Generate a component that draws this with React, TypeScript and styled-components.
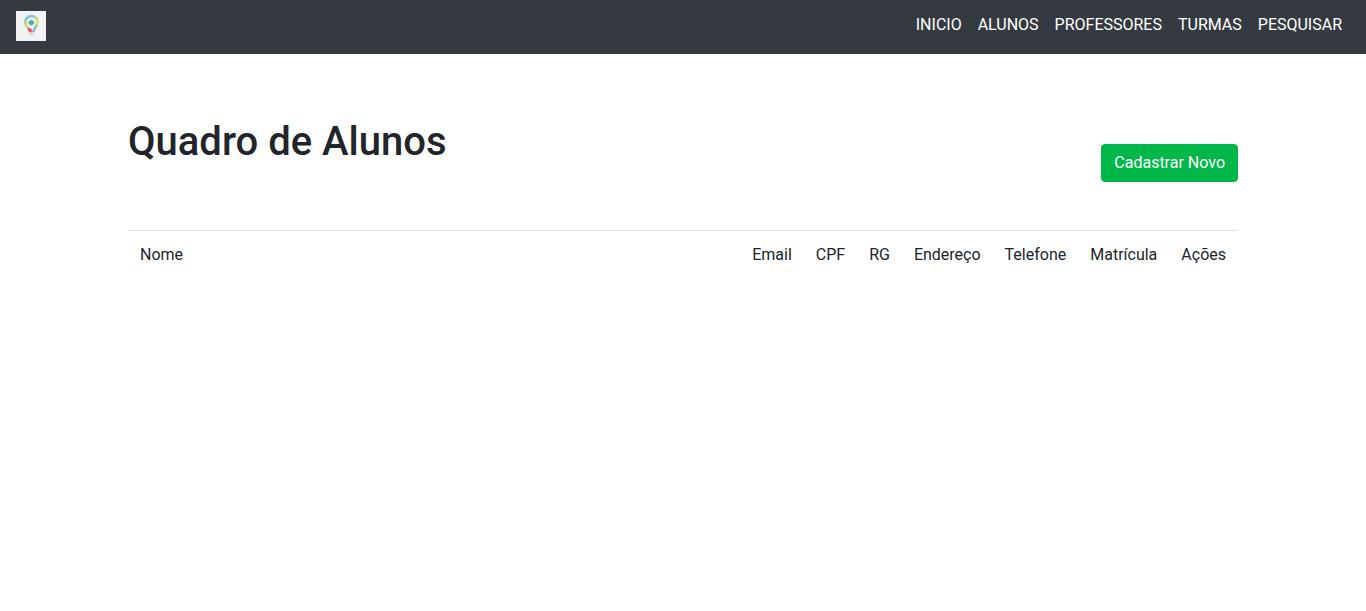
import React from "react";
import styled, { createGlobalStyle } from "styled-components";

const GlobalStyle = createGlobalStyle`
  *, *::before, *::after { box-sizing: border-box; }
  body {
    margin: 0;
    background: #fff;
    color: #212529;
    font-family: Roboto, "Liberation Sans", sans-serif;
    font-size: 16px;
    line-height: 24px;
  }
`;

const Navbar = styled.nav`
  display: flex;
  align-items: flex-start;
  justify-content: space-between;
  padding: 5px 16px 9px;
  background: #343a40;
`;

const Brand = styled.a`
  display: block;
  margin-top: 6px;
  line-height: 0;
`;

const NavList = styled.ul`
  display: flex;
  flex-wrap: wrap;
  margin: 0;
  padding: 0;
  list-style: none;
`;

const NavLink = styled.a`
  display: block;
  padding: 8px;
  color: #fff;
  text-decoration: none;
`;

const Container = styled.main`
  max-width: 1140px;
  margin: 0 auto;
  padding: 64px 15px 0;
`;

const Header = styled.header`
  display: flex;
  align-items: flex-start;
  justify-content: space-between;
  margin-bottom: 48px;
`;

const Title = styled.h1`
  margin: 0;
  font-size: 40px;
  font-weight: 500;
  line-height: 48px;
`;

const Button = styled.button`
  margin-top: 26px;
  padding: 6px 12px;
  border: 1px solid #00b84a;
  border-radius: 4px;
  background: #00b84a;
  color: #fff;
  font: inherit;
  cursor: pointer;
`;

const Table = styled.table`
  width: 100%;
  border-collapse: collapse;
`;

const HeadCell = styled.th<{ $wide?: boolean }>`
  width: ${({ $wide }) => ($wide ? "100%" : "auto")};
  padding: 12px;
  border-top: 1px solid #dee2e6;
  font-weight: 400;
  text-align: left;
  vertical-align: top;
  white-space: nowrap;
`;

const Logo = () => (
  <svg width="30" height="30" viewBox="0 0 30 30" role="img" aria-label="Logo">
    <rect width="30" height="30" fill="#f2f2f2" />
    <g fill="none" strokeWidth="2.6">
      <path d="M12.2 6Q15.4 4.1 18.6 6" stroke="#80c4e4" />
      <path d="M18.6 6Q20.4 7 21.2 9" stroke="#a9d79a" />
      <path d="M21.2 9Q22 11.3 20.7 13.8" stroke="#efdc72" />
      <path d="M20.7 13.8L19.1 17" stroke="#7fcdb9" />
      <path d="M19.1 17L17 21" stroke="#83b4e2" />
      <path d="M12.2 6Q10.2 7.2 9.6 9" stroke="#6fbdd0" />
      <path d="M9.6 9Q8.8 11.4 9.9 13.6" stroke="#9fd58c" />
      <path d="M9.9 13.6L11.7 16.8" stroke="#f2c75f" />
      <path d="M11.7 16.8L13.3 18.4" stroke="#f08a5b" />
      <path d="M13 17.6L15 21" stroke="#e94f56" strokeWidth="3.2" />
    </g>
    <path d="M12.5 10.5L15.3 8.8L18.1 10.5V13L15.3 14.4L12.5 13Z" fill="#50adb0" />
    <rect x="13.2" y="21.6" width="4.4" height="2.6" fill="#d6d8d8" />
  </svg>
);

const links = ["INICIO", "ALUNOS", "PROFESSORES", "TURMAS", "PESQUISAR"];
const columns = ["Nome", "Email", "CPF", "RG", "Endereço", "Telefone", "Matrícula", "Ações"];

export default function App() {
  return (
    <>
      <GlobalStyle />
      <Navbar>
        <Brand href="#"><Logo /></Brand>
        <NavList>
          {links.map((label) => (
            <li key={label}><NavLink href="#">{label}</NavLink></li>
          ))}
        </NavList>
      </Navbar>
      <Container>
        <Header>
          <Title>Quadro de Alunos</Title>
          <Button type="button">Cadastrar Novo</Button>
        </Header>
        <Table>
          <thead>
            <tr>
              {columns.map((name, i) => (
                <HeadCell key={name} scope="col" $wide={i === 0}>{name}</HeadCell>
              ))}
            </tr>
          </thead>
        </Table>
      </Container>
    </>
  );
}
